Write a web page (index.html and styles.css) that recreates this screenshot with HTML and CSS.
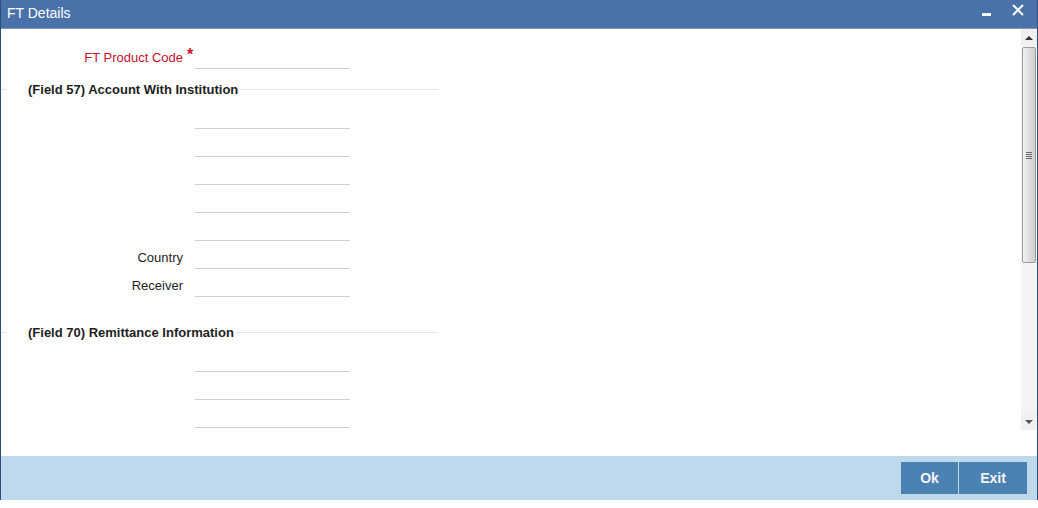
FILE: index.html
```html
<!DOCTYPE html>
<html lang="en">
<head>
    <meta charset="UTF-8">
    <title>FT Details</title>
    <link rel="stylesheet" href="styles.css">
</head>
<body>
    <div class="window">
        <!-- Title bar -->
        <div class="titlebar">
            <span class="title">FT Details</span>
            <div class="controls">
                <span class="minimize"></span>
                <svg class="close" width="12" height="12" viewBox="0 0 12 12">
                    <path d="M1 1 L11 11 M11 1 L1 11" stroke="#fff" stroke-width="2"/>
                </svg>
            </div>
        </div>

        <!-- Scrollable content -->
        <div class="content">
            <div class="form">
                <div class="row">
                    <label class="label required">FT Product Code<span class="star">*</span></label>
                    <div class="input"></div>
                </div>

                <div class="section">
                    <div class="legend"><span>(Field 57) Account With Institution</span></div>
                    <div class="row"><label class="label"></label><div class="input"></div></div>
                    <div class="row"><label class="label"></label><div class="input"></div></div>
                    <div class="row"><label class="label"></label><div class="input"></div></div>
                    <div class="row"><label class="label"></label><div class="input"></div></div>
                    <div class="row"><label class="label"></label><div class="input"></div></div>
                    <div class="row"><label class="label">Country</label><div class="input"></div></div>
                    <div class="row"><label class="label">Receiver</label><div class="input"></div></div>
                </div>

                <div class="section section-70">
                    <div class="legend"><span>(Field 70) Remittance Information</span></div>
                    <div class="row"><label class="label"></label><div class="input"></div></div>
                    <div class="row"><label class="label"></label><div class="input"></div></div>
                    <div class="row"><label class="label"></label><div class="input"></div></div>
                </div>
            </div>

            <!-- Vertical scrollbar -->
            <div class="scrollbar">
                <div class="sb-btn"><span class="arrow-up"></span></div>
                <div class="sb-thumb"><span class="grip"></span></div>
                <div class="sb-track"></div>
                <div class="sb-btn"><span class="arrow-down"></span></div>
            </div>
        </div>
        <div class="spacer"></div>

        <!-- Footer buttons -->
        <div class="footer">
            <button class="btn">Ok</button>
            <button class="btn btn-exit">Exit</button>
        </div>
    </div>
</body>
</html>
```

FILE: styles.css
```css
/* Base page */
html, body {
    margin: 0;
    padding: 0;
    background: #fff;
}

body {
    font-family: "Liberation Sans", Arial, sans-serif;
    font-size: 13px;
    color: #1e1e1e;
}

/* Window frame */
.window {
    width: 1038px;
    height: 500px;
    box-sizing: border-box;
    border-left: 1px solid #2d4f80;
    border-right: 1px solid #2d4f80;
    display: flex;
    flex-direction: column;
}

.titlebar {
    height: 28px;
    background: #4a72aa;
    border-bottom: 1px solid #8496ae;
    display: flex;
    align-items: center;
    justify-content: space-between;
    color: #fff;
    flex-shrink: 0;
}

.title {
    font-size: 14px;
    padding-left: 6px;
    margin-top: -2px;
}

.controls {
    display: flex;
    align-items: center;
    gap: 21px;
    padding-right: 13px;
    margin-top: -9px;
}

.minimize {
    width: 9px;
    height: 3px;
    background: #fff;
    margin-top: 9px;
}

/* Content area */
.content {
    height: 401px;
    display: flex;
    flex-shrink: 0;
}

.form {
    flex: 1;
    padding-top: 12px;
}

.spacer {
    height: 26px;
    flex-shrink: 0;
}

.row {
    display: flex;
    align-items: flex-end;
    height: 28px;
}

.label {
    width: 182px;
    text-align: right;
    line-height: 20px;
    margin-bottom: 1px;
    white-space: nowrap;
}

.label.required {
    color: #c8102e;
}

.star {
    display: inline-block;
    vertical-align: top;
    margin-left: 4px;
    margin-right: -10px;
    width: 6px;
    line-height: 12px;
    font-size: 16px;
    font-weight: bold;
    margin-top: 1px;
}

.input {
    width: 155px;
    margin-left: 12px;
    height: 27px;
    border-bottom: 1px solid #d2d2d2;
}

/* Section legends with rule */
.legend {
    display: flex;
    align-items: center;
    width: 437px;
    height: 20px;
    margin: 10px 0 2px;
    font-weight: bold;
}

.legend::before {
    content: "";
    width: 5px;
    height: 1px;
    background: #e6e6e6;
}

.legend span {
    margin-left: 22px;
    padding-right: 2px;
}

.legend::after {
    content: "";
    flex: 1;
    height: 1px;
    background: #e6e6e6;
}

.section-70 {
    padding-top: 15px;
}

/* Scrollbar */
.scrollbar {
    width: 16px;
    display: flex;
    flex-direction: column;
    background: #f4f4f4;
}

.sb-btn {
    height: 17px;
    display: flex;
    align-items: center;
    justify-content: center;
    background: #f0f0f0;
}

.arrow-up {
    width: 0;
    height: 0;
    border-left: 4px solid transparent;
    border-right: 4px solid transparent;
    border-bottom: 4px solid #333;
}

.arrow-down {
    width: 0;
    height: 0;
    border-left: 4px solid transparent;
    border-right: 4px solid transparent;
    border-top: 4px solid #555;
}

.sb-thumb {
    height: 216px;
    margin: 1px 1px 0;
    box-sizing: border-box;
    border: 1px solid #9c9c9c;
    border-radius: 2px;
    background: linear-gradient(90deg, #f2f2f2, #dcdcdc 60%, #cfcfcf);
    display: flex;
    align-items: center;
    justify-content: center;
}

.grip {
    width: 6px;
    height: 7px;
    background: repeating-linear-gradient(180deg, #666 0 1px, transparent 1px 2px);
}

.sb-track {
    flex: 1;
}

/* Footer */
.footer {
    height: 44px;
    background: #bed9ec;
    display: flex;
    align-items: center;
    justify-content: flex-end;
    padding-right: 10px;
    flex-shrink: 0;
}

.btn {
    height: 32px;
    width: 57px;
    border: none;
    margin: 0;
    background: #4a82b2;
    color: #f4f4f4;
    font-family: "Liberation Sans", Arial, sans-serif;
    font-size: 14px;
    font-weight: bold;
    padding: 0;
}

.btn-exit {
    width: 68px;
    margin-left: 1px;
}
```
